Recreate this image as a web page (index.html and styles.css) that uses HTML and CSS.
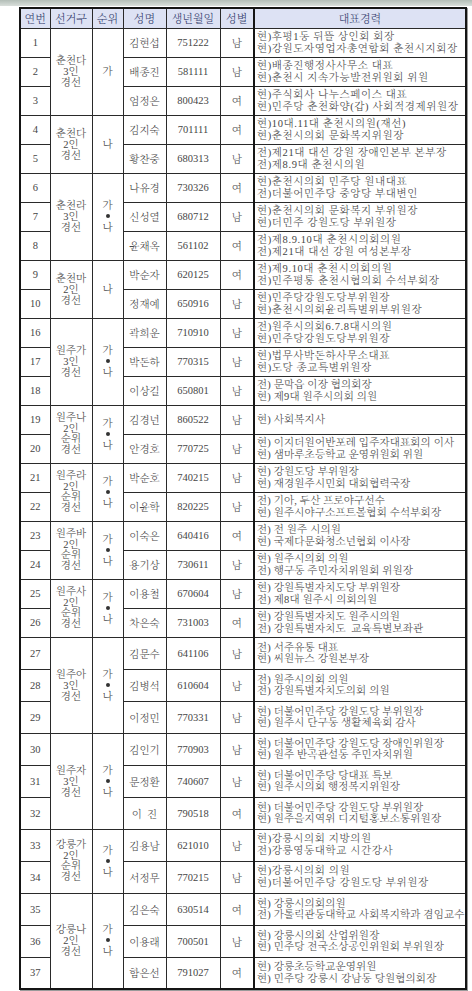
FILE: index.html
```html
<!DOCTYPE html>
<html lang="ko">
<head>
<meta charset="utf-8">
<title>경선 후보자 명단</title>
<link rel="stylesheet" href="styles.css">
</head>
<body>
<div class="band"></div>
<div class="wrap">
<table class="roster">
<colgroup>
<col class="c-no"><col class="c-dist"><col class="c-rank"><col class="c-name"><col class="c-birth"><col class="c-sex"><col class="c-career">
</colgroup>
<thead>
<tr class="head"><th>연번</th><th>선거구</th><th>순위</th><th>성명</th><th>생년월일</th><th>성별</th><th class="career-h">대표경력</th></tr>
</thead>
<tbody>
<tr class="row"><td>1</td><td rowspan="3" class="dist">춘천다<br>3인<br>경선</td><td rowspan="3" class="rank">가</td><td>김현섭</td><td>751222</td><td>남</td><td class="career wide">현)후평1동 뒤뜰 상인회 회장<br>현)강원도자영업자총연합회 춘천시지회장</td></tr>
<tr class="row"><td>2</td><td>배종진</td><td>581111</td><td>남</td><td class="career wide">현)배종진행정사사무소 대표<br>현)춘천시 지속가능발전위원회 위원</td></tr>
<tr class="row"><td>3</td><td>엄정은</td><td>800423</td><td>여</td><td class="career wide">현)주식회사 나누스페이스 대표<br>현)민주당 춘천화양(갑) 사회적경제위원장</td></tr>
<tr class="row"><td>4</td><td rowspan="2" class="dist">춘천다<br>2인<br>경선</td><td rowspan="2" class="rank">나</td><td>김지숙</td><td>701111</td><td>여</td><td class="career wide">현)10대.11대 춘천시의원(재선)<br>현)춘천시의회 문화복지위원장</td></tr>
<tr class="row"><td>5</td><td>황찬중</td><td>680313</td><td>남</td><td class="career wide">전)제21대 대선 강원 장애인본부 본부장<br>전)제8.9대 춘천시의원</td></tr>
<tr class="row"><td>6</td><td rowspan="3" class="dist">춘천라<br>3인<br>경선</td><td rowspan="3" class="rank">가<span class="dot"></span>나</td><td>나유경</td><td>730326</td><td>여</td><td class="career wide">현)춘천시의회 민주당 원내대표<br>전)더불어민주당 중앙당 부대변인</td></tr>
<tr class="row"><td>7</td><td>신성열</td><td>680712</td><td>남</td><td class="career wide">현)춘천시의회 문화복지 부위원장<br>현)더민주 강원도당 부위원장</td></tr>
<tr class="row"><td>8</td><td>윤채옥</td><td>561102</td><td>여</td><td class="career wide">전)제8.9.10대 춘천시의회의원<br>전)제21대 대선 강원 여성본부장</td></tr>
<tr class="row"><td>9</td><td rowspan="2" class="dist">춘천마<br>2인<br>경선</td><td rowspan="2" class="rank">나</td><td>박순자</td><td>620125</td><td>여</td><td class="career wide">전)제9.10대 춘천시의회의원<br>전)민주평통 춘천시협의회 수석부회장</td></tr>
<tr class="row"><td>10</td><td>정재예</td><td>650916</td><td>남</td><td class="career wide">현)민주당강원도당부위원장<br>현)춘천시의회윤리특별위부위원장</td></tr>
<tr class="row"><td>16</td><td rowspan="3" class="dist">원주가<br>3인<br>경선</td><td rowspan="3" class="rank">가<span class="dot"></span>나</td><td>곽희운</td><td>710910</td><td>남</td><td class="career wide">전)원주시의회6.7.8대시의원<br>현)민주당강원도당부위원장</td></tr>
<tr class="row"><td>17</td><td>박돈하</td><td>770315</td><td>남</td><td class="career wide">현)법무사박돈하사무소대표<br>현)도당 종교특별위원장</td></tr>
<tr class="row"><td>18</td><td>이상길</td><td>650801</td><td>남</td><td class="career">전) 문막읍 이장 협의회장<br>현) 제9대 원주시의회 의원</td></tr>
<tr class="row"><td>19</td><td rowspan="2" class="dist four">원주나<br>2인<br>순위<br>경선</td><td rowspan="2" class="rank">가<span class="dot"></span>나</td><td>김경년</td><td>860522</td><td>남</td><td class="career">현) 사회복지사</td></tr>
<tr class="row"><td>20</td><td>안경호</td><td>770725</td><td>남</td><td class="career">현) 이지더원어반포레 입주자대표회의 이사<br>현) 샘마루초등학교 운영위원회 위원</td></tr>
<tr class="row"><td>21</td><td rowspan="2" class="dist four">원주라<br>2인<br>순위<br>경선</td><td rowspan="2" class="rank">가<span class="dot"></span>나</td><td>박순호</td><td>740215</td><td>남</td><td class="career">현) 강원도당 부위원장<br>현) 재경원주시민회 대회협력국장</td></tr>
<tr class="row"><td>22</td><td>이윤학</td><td>820225</td><td>남</td><td class="career">전) 기아, 두산 프로야구선수<br>현) 원주시야구소프트볼협회 수석부회장</td></tr>
<tr class="row"><td>23</td><td rowspan="2" class="dist four">원주바<br>2인<br>순위<br>경선</td><td rowspan="2" class="rank">가<span class="dot"></span>나</td><td>이숙은</td><td>640416</td><td>여</td><td class="career">전) 전 원주 시의원<br>현) 국제다문화청소년협회 이사장</td></tr>
<tr class="row"><td>24</td><td>용기상</td><td>730611</td><td>남</td><td class="career">현) 원주시의회 의원<br>전) 행구동 주민자치위원회 위원장</td></tr>
<tr class="row"><td>25</td><td rowspan="2" class="dist four">원주사<br>2인<br>순위<br>경선</td><td rowspan="2" class="rank">가<span class="dot"></span>나</td><td>이용철</td><td>670604</td><td>남</td><td class="career">현) 강원특별자치도당 부위원장<br>전) 제8대 원주시 의회의원</td></tr>
<tr class="row"><td>26</td><td>차은숙</td><td>731003</td><td>여</td><td class="career">현) 강원특별자치도 원주시의원<br>전) 강원특별자치도&nbsp; 교육특별보좌관</td></tr>
<tr class="row tall"><td>27</td><td rowspan="3" class="dist">원주아<br>3인<br>경선</td><td rowspan="3" class="rank">가<span class="dot"></span>나</td><td>김문수</td><td>641106</td><td>남</td><td class="career">전) 서주유통 대표<br>현) 씨원뉴스 강원본부장</td></tr>
<tr class="row tall"><td>28</td><td>김병석</td><td>610604</td><td>남</td><td class="career">전) 원주시의회 의원<br>전) 강원특별자치도의회 의원</td></tr>
<tr class="row tall"><td>29</td><td>이정민</td><td>770331</td><td>남</td><td class="career">현) 더불어민주당 강원도당 부위원장<br>현) 원주시 단구동 생활체육회 감사</td></tr>
<tr class="row tall"><td>30</td><td rowspan="3" class="dist">원주자<br>3인<br>경선</td><td rowspan="3" class="rank">가<span class="dot"></span>나</td><td>김인기</td><td>770903</td><td>남</td><td class="career">현) 더불어민주당 강원도당 장애인위원장<br>현) 원주 반곡관설동 주민자치위원</td></tr>
<tr class="row tall"><td>31</td><td>문정환</td><td>740607</td><td>남</td><td class="career">현) 더불어민주당 당대표 특보<br>현) 원주시의회 행정복지위원장</td></tr>
<tr class="row tall"><td>32</td><td>이&nbsp;&nbsp;진</td><td>790518</td><td>여</td><td class="career">현) 더불어민주당 강원도당 부위원장<br>현) 원주을지역위 디지털홍보소통위원장</td></tr>
<tr class="row tall"><td>33</td><td rowspan="2" class="dist four">강릉가<br>2인<br>순위<br>경선</td><td rowspan="2" class="rank">가<span class="dot"></span>나</td><td>김용남</td><td>621010</td><td>남</td><td class="career wide">현)강릉시의회 지방의원<br>전)강릉영동대학교 시간강사</td></tr>
<tr class="row tall"><td>34</td><td>서정무</td><td>770215</td><td>남</td><td class="career wide">현)강릉시의회 의원<br>현)더불어민주당 강원도당 부위원장</td></tr>
<tr class="row tall"><td>35</td><td rowspan="3" class="dist">강릉나<br>2인<br>경선</td><td rowspan="3" class="rank">가<span class="dot"></span>나</td><td>김은숙</td><td>630514</td><td>여</td><td class="career">현) 강릉시의회의원<br>전) 가톨릭관동대학교 사회복지학과 겸임교수</td></tr>
<tr class="row tall"><td>36</td><td>이용래</td><td>700501</td><td>남</td><td class="career">현) 강릉시의회 산업위원장<br>현) 민주당 전국소상공인위원회 부위원장</td></tr>
<tr class="row tall"><td>37</td><td>함은선</td><td>791027</td><td>여</td><td class="career">현) 강릉초등학교운영위원<br>현) 민주당 강릉시 강남동 당원협의회장</td></tr>
</tbody>
</table>
</div>
</body>
</html>
```

FILE: styles.css
```css
html, body {
  margin: 0;
  padding: 0;
  background: #ffffff;
}

body {
  width: 472px;
  height: 991px;
  overflow: hidden;
  font-family: "Liberation Serif", "Noto Serif CJK KR", "Noto Sans CJK KR", serif;
  font-weight: 300;
  color: #454545;
}

.band {
  height: 6px;
  background: linear-gradient(#b3beb7, #d9dfdb);
  margin-bottom: 1px;
}

.wrap {
  padding-left: 19px;
}

.roster {
  width: 446px;
  table-layout: fixed;
  border-collapse: collapse;
  border: 2px solid #151515;
  box-shadow: 1px 1px 0 #9a9a9a;
  font-size: 10.5px;
}

.c-no { width: 30px; }
.c-dist { width: 42px; }
.c-rank { width: 31px; }
.c-name { width: 43px; }
.c-birth { width: 54px; }
.c-sex { width: 34px; }
.c-career { width: 212px; }

.roster th,
.roster td {
  border: 1px solid #2a2a2a;
  padding: 0;
  text-align: center;
  vertical-align: middle;
  white-space: nowrap;
  overflow: hidden;
}

.head {
  height: 20px;
  background: #dde2f4;
}

.head th {
  font-weight: 300;
  font-size: 11px;
  color: #333c6c;
}

.row { height: 29px; }
.row.tall { height: 32px; }

.roster .career,
.roster .career-h {
  border-left: 2px solid #151515;
}

.roster .career {
  text-align: left;
  padding: 0 0 0 2px;
  line-height: 11.5px;
  letter-spacing: 0.15px;
}

.roster .career.wide {
  font-size: 10.5px;
  line-height: 12px;
  letter-spacing: 0.6px;
}

.roster .dist {
  line-height: 11px;
}

.roster .dist.four {
  line-height: 10.5px;
}

.roster .rank {
  line-height: 11px;
}

.dot {
  display: block;
  width: 4px;
  height: 4px;
  border-radius: 50%;
  background: #333333;
  margin: 3px auto 4px;
}
```
